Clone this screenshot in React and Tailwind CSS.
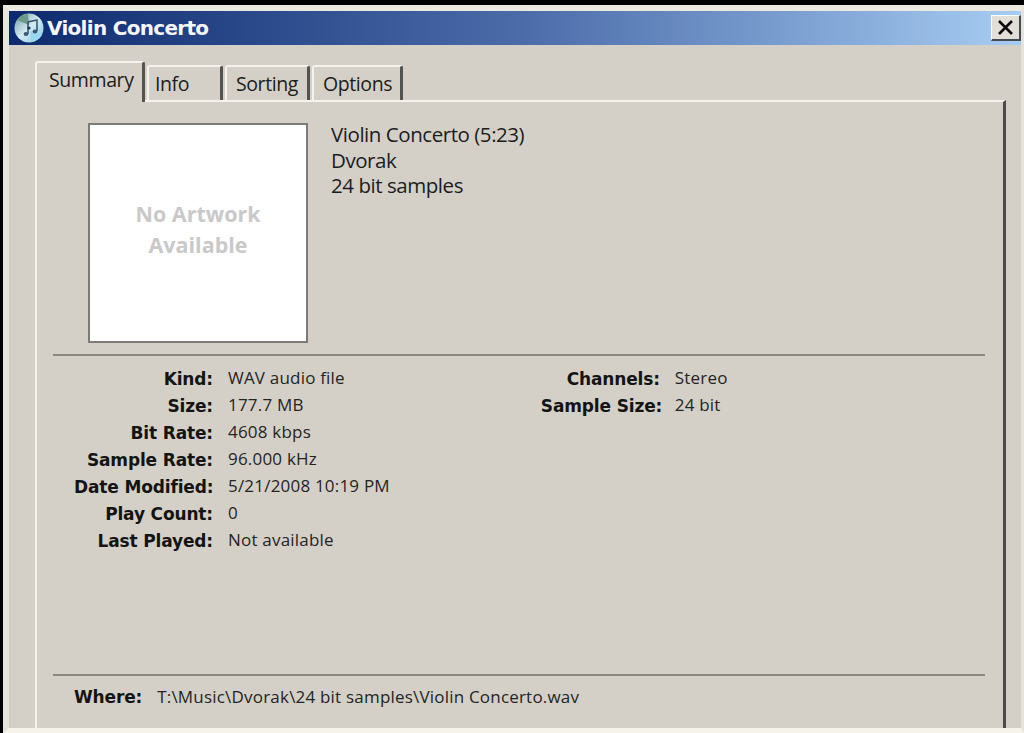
const sans = { fontFamily: '"Open Sans", "Liberation Sans", sans-serif' };

function AppIcon() {
  return (
    <svg width="32" height="32" viewBox="0 0 32 32" className="shrink-0">
      <defs>
        <linearGradient id="d" x1="0" y1="0" x2="1" y2="1">
          <stop offset="0" stopColor="#6f98a8" />
          <stop offset="0.5" stopColor="#d4ecf4" />
          <stop offset="1" stopColor="#7cc4e6" />
        </linearGradient>
      </defs>
      <circle cx="16" cy="16" r="14.5" fill="url(#d)" />
      <path d="M4 8 A14.5 14.5 0 0 1 15 2 L16 13 Z" fill="#6d9a88" />
      <path d="M29 23 A14.5 14.5 0 0 1 18 30 L17 19 Z" fill="#9ad8f2" />
      <path d="M15 22 V10 L24 8 V19" fill="none" stroke="#3d5a72" strokeWidth="1.6" />
      <ellipse cx="13" cy="22" rx="2.4" ry="2" fill="#3d5a72" />
      <ellipse cx="22" cy="19.5" rx="2.4" ry="2" fill="#3d5a72" />
      <circle cx="16" cy="16" r="1.6" fill="#1d3a55" />
    </svg>
  );
}

function Tab({ label, active, className }) {
  return (
    <div
      className={`flex items-center border-t-2 border-l-2 border-r-[3px] border-t-[#f4f2ec] border-l-[#f4f2ec] border-r-[#55534e] bg-[#d4d0c8] rounded-t-[3px] ${active ? "h-[41px] -mb-[2px] relative" : "h-[35px]"} ${className}`}
    >
      <span className={`text-[19.5px] tracking-[-0.4px] leading-none text-[#1c1c1c] ${active ? "-mt-[5px]" : ""}`}>{label}</span>
    </div>
  );
}

const left = [
  ["Kind:", "WAV audio file"],
  ["Size:", "177.7 MB"],
  ["Bit Rate:", "4608 kbps"],
  ["Sample Rate:", "96.000 kHz"],
  ["Date Modified:", "5/21/2008 10:19 PM"],
  ["Play Count:", "0"],
  ["Last Played:", "Not available"],
];
const right = [
  ["Channels:", "Stereo"],
  ["Sample Size:", "24 bit"],
];

function Label({ children }) {
  return (
    <span className="font-bold text-[17px] tracking-[-0.15px] leading-[27px] text-[#141414] text-right whitespace-nowrap" style={{ fontFamily: '"DejaVu Sans", sans-serif' }}>
      {children}
    </span>
  );
}

function Value({ children }) {
  return <span className="-mt-[2px] text-[17px] tracking-[0.2px] leading-[27px] text-[#242424] whitespace-nowrap">{children}</span>;
}

function Pairs({ rows, labelWidth }) {
  return (
    <div className="grid gap-x-[15px] auto-rows-[27px] content-start" style={{ gridTemplateColumns: `${labelWidth}px auto` }}>
      {rows.map(([k, v]) => (
        <div key={k} className="contents">
          <Label>{k}</Label>
          <Value>{v}</Value>
        </div>
      ))}
    </div>
  );
}

export default function App() {
  return (
    <div className="w-[1024px] h-[733px] overflow-hidden bg-black pt-[5px] pl-[3px]" style={sans}>
      <div className="w-[1021px] h-[728px] bg-[#d4d0c8] border-t-[6px] border-l-[6px] border-r-[3px] border-b-[5px] border-t-[#ece9e0] border-l-[#e6e3da] border-r-[#e6e3da] border-b-[#f6f4ea] flex flex-col">
        <div className="h-[34px] shrink-0 flex items-center pl-[4px] bg-gradient-to-r from-[#0e2a6e] via-[#4a6aa8] to-[#a8cdf2]">
          <AppIcon />
          <span className="ml-[2px] text-[20px] font-bold text-[#f4f6fa] leading-none" style={{ fontFamily: '"DejaVu Sans", sans-serif', letterSpacing: "-0.7px" }}>
            Violin Concerto
          </span>
          <div className="ml-auto w-[30px] h-[26px] flex items-center justify-center bg-[#e2dfd8] border-t border-l border-white border-r-2 border-b-2 border-r-[#444a55] border-b-[#444a55]">
            <svg width="17" height="15" viewBox="0 0 17 15">
              <path d="M2 1 L15 14 M15 1 L2 14" stroke="#0c0c0c" strokeWidth="2.6" />
            </svg>
          </div>
        </div>
        <div className="pl-[26px] pr-[15px] pt-[17px] flex-1 flex flex-col min-h-0">
          <div className="flex items-end gap-[2px] h-[38px] relative z-10">
            <Tab label="Summary" active className="w-[110px] pl-[12px]" />
            <Tab label="Info" className="w-[76px] pl-[6px]" />
            <Tab label="Sorting" className="w-[85px] pl-[9px]" />
            <Tab label="Options" className="w-[91px] pl-[9px]" />
          </div>
          <div className="flex-1 min-h-0 border-t-2 border-l-2 border-r-[3px] border-t-[#f4f2ec] border-l-[#f4f2ec] border-r-[#4d4b46] pl-[16px] pr-[18px]">
            <div className="flex pt-[21px] pl-[35px] h-[254px] border-b-2 border-b-[#8a877f]">
              <div className="w-[220px] h-[220px] bg-white border-2 border-[#7d7b75] flex flex-col items-center justify-center pb-[8px]">
                <span className="font-bold text-[21.5px] leading-[31px] text-[#c9c9c9]">No Artwork</span>
                <span className="font-bold text-[21.5px] leading-[31px] text-[#c9c9c9]">Available</span>
              </div>
              <div className="ml-[23px] -mt-[1px] flex flex-col text-[20.5px] leading-[25.5px] text-[#1c1c1c] tracking-[-0.45px]">
                <span>Violin Concerto (5:23)</span>
                <span>Dvorak</span>
                <span>24 bit samples</span>
              </div>
            </div>
            <div className="flex h-[320px] border-b-2 border-b-[#8a877f] pt-[10px] pl-[21px]">
              <Pairs rows={left} labelWidth={139} />
              <div className="ml-[151px]">
                <Pairs rows={right} labelWidth={119} />
              </div>
            </div>
            <div className="flex items-center gap-[15px] pl-[21px] pt-[8px]">
              <Label>Where:</Label>
              <Value>T:\Music\Dvorak\24 bit samples\Violin Concerto.wav</Value>
            </div>
          </div>
        </div>
      </div>
    </div>
  );
}
